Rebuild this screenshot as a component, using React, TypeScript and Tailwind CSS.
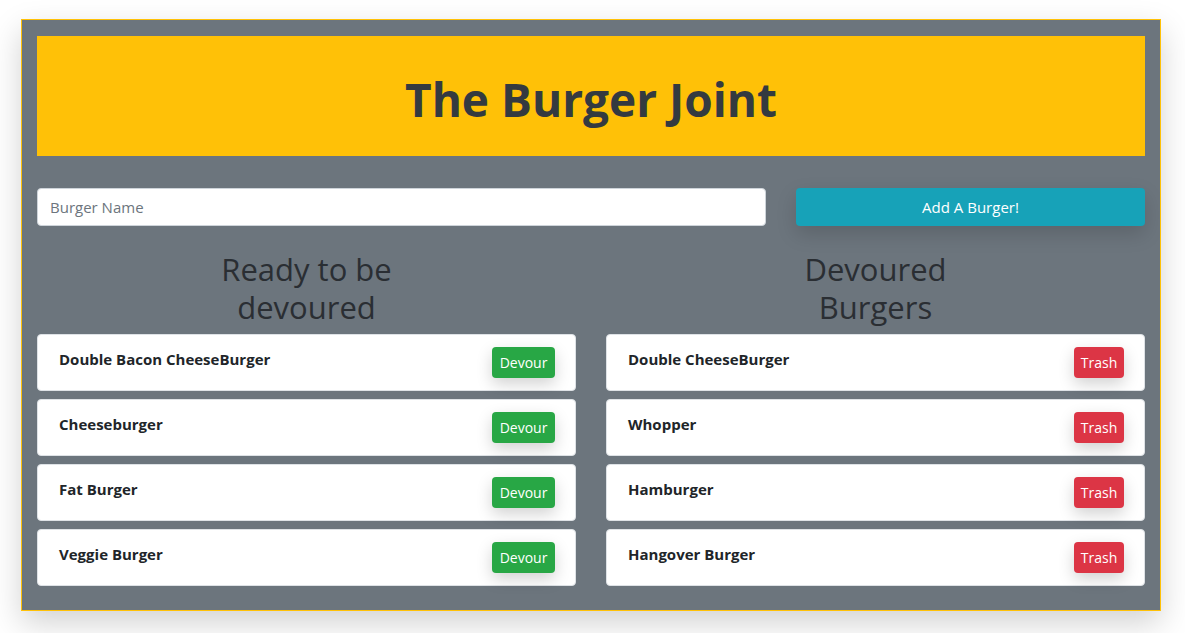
import React from 'react';

const ready = ['Double Bacon CheeseBurger', 'Cheeseburger', 'Fat Burger', 'Veggie Burger'];
const devoured = ['Double CheeseBurger', 'Whopper', 'Hamburger', 'Hangover Burger'];

function BurgerCard({ name, action }: { name: string; action: 'devour' | 'trash' }) {
  return (
    <div className="flex items-center justify-between h-[57px] bg-white rounded-[4px] border border-[#dee2e6] pl-[21px] pr-[20px]">
      <span className="text-[15px] font-bold text-[#212529] -mt-[6px]">{name}</span>
      {action === 'devour' ? (
        <button className="h-[31px] w-[63px] rounded-[4px] bg-[#28a745] text-white text-[14px] shadow-[0_6px_16px_rgba(0,0,0,0.18)]">
          Devour
        </button>
      ) : (
        <button className="h-[31px] w-[50px] rounded-[4px] bg-[#dc3545] text-white text-[14px] shadow-[0_6px_16px_rgba(0,0,0,0.18)]">
          Trash
        </button>
      )}
    </div>
  );
}

export default function App() {
  return (
    <div
      className="min-h-[633px] bg-white pt-[19px] pl-[21px]"
      style={{ fontFamily: '"Open Sans", "Noto Sans", sans-serif' }}
    >
      <div className="w-[1140px] border border-[#ffc107] bg-[#6c757d] px-[15px] pt-[16px] pb-[24px] shadow-[0_12px_30px_rgba(0,0,0,0.18)]">
        {/* header */}
        <div className="h-[120px] bg-[#ffc107] flex items-center justify-center">
          <h1 className="text-[46px] font-bold text-[#343a40] leading-none mt-[6px]">The Burger Joint</h1>
        </div>

        {/* add form */}
        <div className="flex gap-[30px] mt-[32px]">
          <input
            placeholder="Burger Name"
            className="w-[729px] h-[38px] rounded-[4px] bg-white border border-[#ced4da] px-[12px] text-[15px] text-[#495057] placeholder:text-[#6c757d] outline-none"
          />
          <button className="w-[349px] h-[38px] rounded-[4px] bg-[#17a2b8] text-white text-[15px] shadow-[0_8px_20px_rgba(0,0,0,0.15)]">
            Add A Burger!
          </button>
        </div>

        {/* lists */}
        <div className="grid grid-cols-2 gap-[30px] mt-[24px]">
          <div>
            <h2 className="w-[220px] mx-auto text-center text-[31px] font-medium leading-[38px] text-[#2a2e33] mb-[8px]">
              Ready to be devoured
            </h2>
            <div className="flex flex-col gap-[8px]">
              {ready.map((b) => (
                <BurgerCard key={b} name={b} action="devour" />
              ))}
            </div>
          </div>
          <div>
            <h2 className="w-[220px] mx-auto text-center text-[31px] font-medium leading-[38px] text-[#2a2e33] mb-[8px]">
              Devoured Burgers
            </h2>
            <div className="flex flex-col gap-[8px]">
              {devoured.map((b) => (
                <BurgerCard key={b} name={b} action="trash" />
              ))}
            </div>
          </div>
        </div>
      </div>
    </div>
  );
}
